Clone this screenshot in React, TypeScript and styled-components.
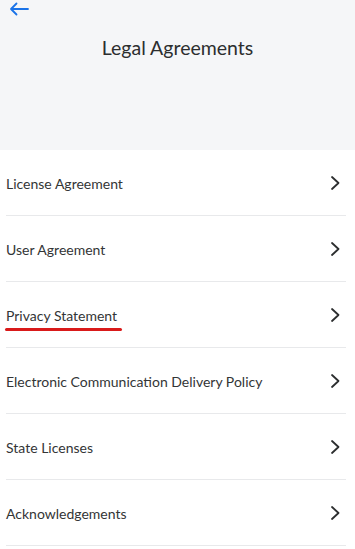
import styled, { createGlobalStyle } from "styled-components"

const GlobalStyle = createGlobalStyle`
    html, body {
        margin: 0;
        padding: 0;
        background-color: #fff;
        font-family: Lato, "Noto Sans", sans-serif;
    }
`

const Page = styled.div`
    width: 355px;
    min-height: 549px;
    background-color: #fff;
`

const Header = styled.div`
    height: 150px;
    background-color: #f5f6f8;
    display: flex;
    flex-direction: column;
`

const BackBtn = styled.div`
    padding: 0 0 0 9px;
    height: 18px;
    display: flex;
    align-items: center;
    color: #1a73e8;
    cursor: pointer;
`

const Title = styled.h1`
    margin: 18px 0 0;
    text-align: center;
    font-size: 19.5px;
    font-weight: 400;
    color: #2c2e2f;
`

const List = styled.ul`
    list-style: none;
    margin: 0;
    padding: 0 9px 0 6px;
`

const Row = styled.li`
    height: 65px;
    display: flex;
    align-items: center;
    justify-content: space-between;
    border-bottom: 1px solid #e8e9eb;
    cursor: pointer;
`

interface LabelProps {
    $underlined?: boolean
}

const Label = styled.span<LabelProps>`
    position: relative;
    font-size: 14px;
    color: #333536;
    padding-top: 2px;
    &:after {
        content: "";
        display: ${({ $underlined }) => ($underlined ? "block" : "none")};
        position: absolute;
        left: -1px;
        right: -5px;
        bottom: -7px;
        height: 3px;
        border-radius: 2px;
        background-color: #d91a1a;
    }
`

const Chevron = styled.svg`
    width: 12px;
    height: 16px;
    margin-right: 5px;
`

const items = [
    "License Agreement",
    "User Agreement",
    "Privacy Statement",
    "Electronic Communication Delivery Policy",
    "State Licenses",
    "Acknowledgements",
]

export default function App() {
    return (
        <Page>
            <GlobalStyle />
            <Header>
                <BackBtn>
                    <svg width="20" height="14" viewBox="0 0 20 14" fill="none">
                        <path
                            d="M19 7H2M7.5 1.5L2 7l5.5 5.5"
                            stroke="currentColor"
                            strokeWidth="1.8"
                            strokeLinecap="round"
                            strokeLinejoin="round"
                        />
                    </svg>
                </BackBtn>
                <Title>Legal Agreements</Title>
            </Header>
            <List>
                {items.map((item) => (
                    <Row key={item}>
                        <Label $underlined={item === "Privacy Statement"}>{item}</Label>
                        <Chevron viewBox="0 0 12 16" fill="none">
                            <path
                                d="M3 2l6.5 6L3 14"
                                stroke="#2c2e2f"
                                strokeWidth="1.8"
                                strokeLinecap="round"
                                strokeLinejoin="round"
                            />
                        </Chevron>
                    </Row>
                ))}
            </List>
        </Page>
    )
}
